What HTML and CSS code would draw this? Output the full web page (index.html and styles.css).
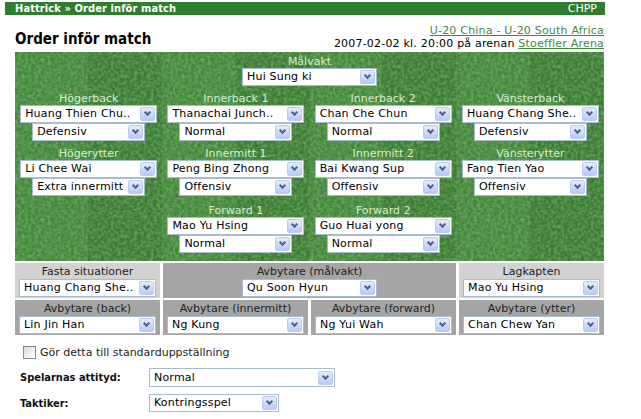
FILE: index.html
```html
<!DOCTYPE html>
<html lang="sv">
<head>
<meta charset="utf-8">
<title>Order inför match</title>
<link rel="stylesheet" href="styles.css">
</head>
<body>
<div class="topbar"><span class="crumb">Hattrick » Order inför match</span><span class="chpp">CHPP</span></div>
<div class="page">
  <div class="head">
    <h1>Order inför match</h1>
    <div class="info"><a href="#">U-20 China - U-20 South Africa</a><br>2007-02-02 kl. 20:00 på arenan <a href="#">Stoeffler Arena</a></div>
  </div>

  <div class="pitch">
    <div class="pos gk"><div class="lbl">Målvakt</div><div class="sel gksel"><span class="val">Hui Sung ki</span><span class="btn"></span></div></div>

    <div class="pos"><div class="lbl">Högerback</div><div class="sel"><span class="val">Huang Thien Chu..</span><span class="btn"></span></div><div class="sel sm"><span class="val">Defensiv</span><span class="btn"></span></div></div>
    <div class="pos"><div class="lbl">Innerback 1</div><div class="sel"><span class="val">Thanachai Junch..</span><span class="btn"></span></div><div class="sel sm"><span class="val">Normal</span><span class="btn"></span></div></div>
    <div class="pos"><div class="lbl">Innerback 2</div><div class="sel"><span class="val">Chan Che Chun</span><span class="btn"></span></div><div class="sel sm"><span class="val">Normal</span><span class="btn"></span></div></div>
    <div class="pos"><div class="lbl">Vänsterback</div><div class="sel"><span class="val">Huang Chang She..</span><span class="btn"></span></div><div class="sel sm"><span class="val">Defensiv</span><span class="btn"></span></div></div>

    <div class="pos"><div class="lbl">Högerytter</div><div class="sel"><span class="val">Li Chee Wai</span><span class="btn"></span></div><div class="sel sm"><span class="val">Extra innermitt</span><span class="btn"></span></div></div>
    <div class="pos"><div class="lbl">Innermitt 1</div><div class="sel"><span class="val">Peng Bing Zhong</span><span class="btn"></span></div><div class="sel sm"><span class="val">Offensiv</span><span class="btn"></span></div></div>
    <div class="pos"><div class="lbl">Innermitt 2</div><div class="sel"><span class="val">Bai Kwang Sup</span><span class="btn"></span></div><div class="sel sm"><span class="val">Offensiv</span><span class="btn"></span></div></div>
    <div class="pos"><div class="lbl">Vänsterytter</div><div class="sel"><span class="val">Fang Tien Yao</span><span class="btn"></span></div><div class="sel sm"><span class="val">Offensiv</span><span class="btn"></span></div></div>

    <div class="pos fw f1"><div class="lbl">Forward 1</div><div class="sel"><span class="val">Mao Yu Hsing</span><span class="btn"></span></div><div class="sel sm"><span class="val">Normal</span><span class="btn"></span></div></div>
    <div class="pos fw f2"><div class="lbl">Forward 2</div><div class="sel"><span class="val">Guo Huai yong</span><span class="btn"></span></div><div class="sel sm"><span class="val">Normal</span><span class="btn"></span></div></div>
  </div>

  <div class="subs">
    <div class="cell light"><div class="clbl">Fasta situationer</div><div class="sel"><span class="val">Huang Chang She..</span><span class="btn"></span></div></div>
    <div class="cell dark span2"><div class="clbl">Avbytare (målvakt)</div><div class="sel gksel"><span class="val">Qu Soon Hyun</span><span class="btn"></span></div></div>
    <div class="cell light"><div class="clbl">Lagkapten</div><div class="sel"><span class="val">Mao Yu Hsing</span><span class="btn"></span></div></div>
    <div class="cell dark"><div class="clbl">Avbytare (back)</div><div class="sel"><span class="val">Lin Jin Han</span><span class="btn"></span></div></div>
    <div class="cell dark"><div class="clbl">Avbytare (innermitt)</div><div class="sel"><span class="val">Ng Kung</span><span class="btn"></span></div></div>
    <div class="cell dark"><div class="clbl">Avbytare (forward)</div><div class="sel"><span class="val">Ng Yui Wah</span><span class="btn"></span></div></div>
    <div class="cell dark"><div class="clbl">Avbytare (ytter)</div><div class="sel"><span class="val">Chan Chew Yan</span><span class="btn"></span></div></div>
  </div>

  <label class="std"><span class="cb"></span>Gör detta till standarduppställning</label>

  <div class="form">
    <div class="flbl">Spelarnas attityd:</div>
    <div class="sel wide"><span class="val">Normal</span><span class="btn"></span></div>
    <div class="flbl">Taktiker:</div>
    <div class="sel mid"><span class="val">Kontringsspel</span><span class="btn"></span></div>
    <div class="flbl"></div>
    <div class="sel wide"><span class="val"></span><span class="btn"></span></div>
  </div>
</div>
</body>
</html>
```

FILE: styles.css
```css
html, body {
  margin: 0;
  padding: 0;
  background: #fff;
}
body {
  font-family: "DejaVu Sans", Verdana, sans-serif;
  font-size: 11px;
  color: #000;
}
a {
  color: #3d8b3d;
  text-decoration: underline;
}

.topbar {
  margin: 2px 0 0 5px;
  width: 600px;
  height: 13px;
  box-sizing: border-box;
  padding: 0 8px 0 10px;
  background: #2f7d2f;
  color: #fff;
  display: flex;
  justify-content: space-between;
  line-height: 13px;
}
.crumb {
  font-family: "DejaVu Sans Condensed", "DejaVu Sans", sans-serif;
  font-weight: bold;
  letter-spacing: 0.1px;
}

.page {
  margin-left: 15px;
  width: 589px;
}

.head {
  height: 36px;
  display: flex;
  justify-content: space-between;
  align-items: flex-end;
  margin-bottom: 1px;
}
.head h1 {
  margin: 0 0 3px 0;
  font-family: "DejaVu Sans Condensed", "DejaVu Sans", sans-serif;
  font-size: 15px;
  line-height: 18px;
  font-weight: bold;
}
.info {
  text-align: right;
  line-height: 13px;
  padding-bottom: 1px;
  letter-spacing: 0.2px;
}

.pitch {
  height: 209px;
  box-sizing: border-box;
  padding: 3px 0 0 0;
  display: grid;
  grid-template-columns: repeat(4, 1fr);
  grid-auto-rows: max-content;
  row-gap: 6px;
  background-color: #3f7d37;
  background-image:
    url("data:image/svg+xml;utf8,<svg xmlns='http://www.w3.org/2000/svg' width='160' height='160'><filter id='n'><feTurbulence type='fractalNoise' baseFrequency='0.3' numOctaves='3' stitchTiles='stitch'/><feColorMatrix values='0 0 0 0 0.25  0 0 0 0 0.55  0 0 0 0 0.2  0 0 0 1.1 -0.35'/></filter><rect width='160' height='160' filter='url(%23n)'/></svg>"),
    repeating-linear-gradient(90deg, #44853c 0 73px, #3b7a34 73px 147px);
}
.pos {
  display: flex;
  flex-direction: column;
  align-items: center;
}
.gk { grid-column: 1 / -1; }
.f1 { grid-column: 2; margin-top: 2px; }
.f2 { grid-column: 3; margin-top: 2px; }
.lbl {
  height: 13px;
  line-height: 13px;
  color: #d6eecc;
}

.sel {
  display: flex;
  align-items: center;
  width: 137px;
  height: 18px;
  box-sizing: border-box;
  border: 1px solid #a9bccd;
  background: #fff;
  padding: 0 1px 0 4px;
  line-height: 16px;
  color: #000;
}
.sel.sm { width: 113px; }
.sel.gksel { width: 135px; }
.val {
  flex: 1;
  white-space: nowrap;
  overflow: hidden;
  letter-spacing: 0.2px;
}
.btn {
  position: relative;
  width: 15px;
  height: 14px;
  box-sizing: border-box;
  border: 1px solid #bccbef;
  border-radius: 2px;
  background: linear-gradient(#e3ebfd, #b7cbf6);
}
.btn::after {
  content: "";
  position: absolute;
  left: 4px;
  top: 2px;
  width: 3px;
  height: 3px;
  border-right: 2px solid #4d6185;
  border-bottom: 2px solid #4d6185;
  transform: rotate(45deg);
}

.subs {
  margin-top: 2px;
  display: grid;
  grid-template-columns: repeat(4, 1fr);
  gap: 2px 3px;
}
.cell {
  display: flex;
  flex-direction: column;
  align-items: center;
  padding: 2px 0 2px;
  height: 35px;
  box-sizing: border-box;
}
.cell.light { background: #d2d2d2; }
.cell.dark { background: #a5a5a5; }
.span2 { grid-column: span 2; }
.clbl {
  height: 14px;
  line-height: 14px;
  color: #222;
}

.std {
  display: flex;
  align-items: center;
  margin: 11px 0 0 8px;
  height: 13px;
  color: #222;
}
.cb {
  width: 13px;
  height: 13px;
  box-sizing: border-box;
  border: 1px solid #7a8a99;
  background: linear-gradient(135deg, #dcdcd6, #fff);
  margin-right: 4px;
}

.form {
  margin: 9px 0 0 5px;
  display: grid;
  grid-template-columns: 129px max-content;
  row-gap: 7px;
  align-items: center;
}
.flbl {
  font-family: "DejaVu Sans Condensed", "DejaVu Sans", sans-serif;
  font-weight: bold;
  color: #111;
}
.sel.wide { width: 186px; height: 19px; }
.sel.mid { width: 130px; height: 18px; }
```
